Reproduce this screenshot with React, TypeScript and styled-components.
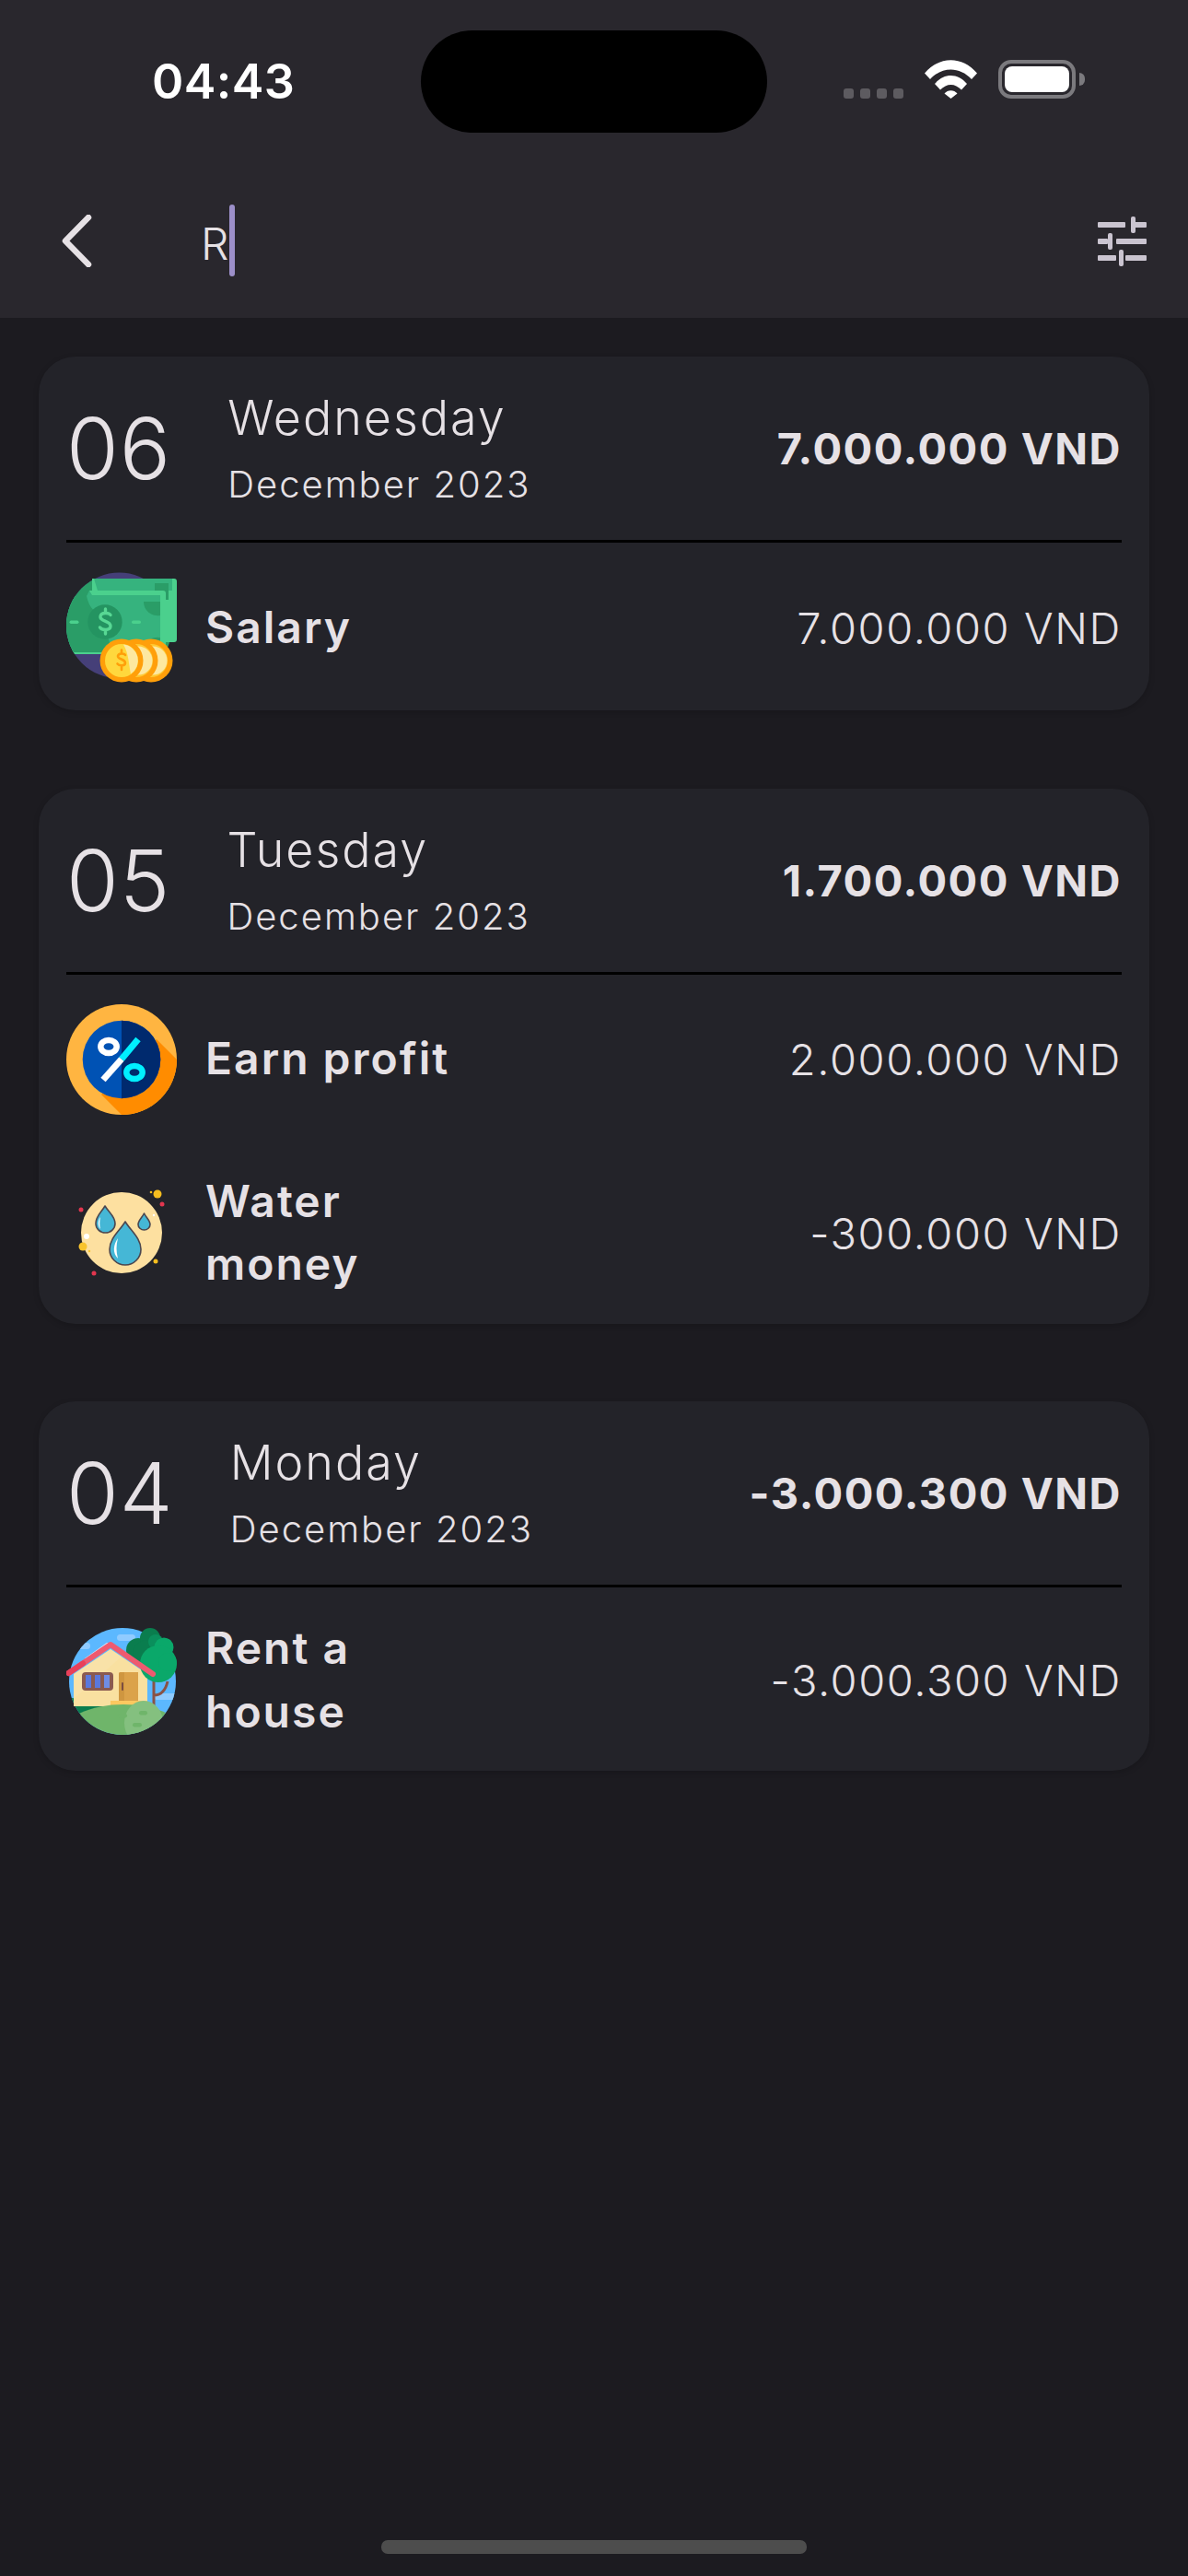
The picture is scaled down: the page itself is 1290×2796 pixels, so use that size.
import React from "react";
import styled, { createGlobalStyle } from "styled-components";

const GlobalStyle = createGlobalStyle`
  html, body {
    margin: 0;
    padding: 0;
    background: #1c1b20;
  }
  * {
    box-sizing: border-box;
  }
`;

const Page = styled.div`
  width: 1290px;
  height: 2796px;
  display: flex;
  flex-direction: column;
  background: #1c1b20;
  color: #e6e1e5;
  font-family: Inter, "Liberation Sans", sans-serif;
  overflow: hidden;
`;

const Header = styled.header`
  height: 345px;
  background: #29272d;
  display: flex;
  flex-direction: column;
`;

const StatusBar = styled.div`
  display: flex;
  align-items: center;
  padding-top: 33px;
`;

const StatusLeft = styled.div`
  width: 457px;
  padding-left: 165px;
`;

const Time = styled.span`
  font-size: 52px;
  font-weight: 600;
  color: #fff;
  letter-spacing: 0.4px;
`;

const Notch = styled.div`
  width: 376px;
  height: 111px;
  border-radius: 56px;
  background: #000;
`;

const StatusRight = styled.div`
  flex: 1;
  padding-left: 83px;
  margin-bottom: 5px;
  display: flex;
  align-items: flex-end;
`;

const SignalDots = styled.div`
  display: flex;
  gap: 7px;
  margin-right: 23px;
`;

const SignalDot = styled.span`
  width: 11px;
  height: 11px;
  border-radius: 3px;
  background: #5d5b60;
`;

const WifiIcon = styled.svg`
  width: 57px;
  height: 42px;
  margin-right: 23px;
`;

const Battery = styled.div`
  width: 84px;
  height: 42px;
  border: 4px solid #7b7a7e;
  border-radius: 14px;
  padding: 3px;
`;

const BatteryFill = styled.div`
  width: 100%;
  height: 100%;
  background: #fff;
  border-radius: 8px;
`;

const BatteryNub = styled.div`
  width: 6px;
  height: 14px;
  margin: 0 0 14px 4px;
  background: #7b7a7e;
  border-radius: 0 6px 6px 0;
`;

const Toolbar = styled.div`
  flex: 1;
  display: flex;
  align-items: center;
  padding: 34px 45px 0 67px;
`;

const BackIcon = styled.svg`
  width: 33px;
  height: 57px;
  flex: none;
`;

const SearchField = styled.div`
  flex: 1;
  margin: 6px 0 0 118px;
  display: flex;
  align-items: center;
  font-size: 48px;
  font-weight: 300;
`;

const Caret = styled.span`
  width: 6px;
  height: 78px;
  margin-left: 1px;
  margin-top: -8px;
  border-radius: 3px;
  background: #9c8fc9;
`;

const FilterIcon = styled.svg`
  width: 53px;
  height: 54px;
  flex: none;
`;

const Content = styled.main`
  flex: 1;
  display: flex;
  flex-direction: column;
  gap: 84.5px;
  padding: 42px 42px 0;
`;

const Card = styled.section`
  background: #232329;
  border-radius: 40px;
  box-shadow: 0 2px 6px rgba(0, 0, 0, 0.18);
`;

const CardHeader = styled.div`
  height: 199px;
  display: flex;
  align-items: center;
  padding: 0 30px;
`;

const DayNumber = styled.span`
  font-size: 92px;
  font-weight: 300;
  letter-spacing: 1px;
`;

const DateBlock = styled.div`
  margin-left: 61px;
  flex: 1;
  display: flex;
  flex-direction: column;
  gap: 17px;
`;

const Weekday = styled.span`
  font-size: 52px;
  font-weight: 300;
  line-height: 62px;
  letter-spacing: 2px;
`;

const MonthYear = styled.span`
  font-size: 40px;
  font-weight: 300;
  line-height: 48px;
  letter-spacing: 2px;
`;

const DayTotal = styled.span`
  font-size: 47px;
  font-weight: 700;
  letter-spacing: 1.5px;
`;

const Divider = styled.div`
  height: 3px;
  margin: 0 30px 2px;
  background: #000;
`;

const Row = styled.div`
  display: flex;
  align-items: center;
  padding: 30px;
`;

const RowIcon = styled.svg`
  width: 120px;
  height: 120px;
  flex: none;
`;

const RowName = styled.span`
  flex: 1;
  margin-left: 31px;
  max-width: 290px;
  font-size: 48px;
  font-weight: 600;
  line-height: 68.5px;
  letter-spacing: 2px;
`;

const RowAmount = styled.span`
  margin-left: auto;
  font-size: 47px;
  font-weight: 300;
  letter-spacing: 1.6px;
`;

const HomeBar = styled.div`
  width: 462px;
  height: 15px;
  margin: 0 auto 24px;
  border-radius: 7px;
  background: #4d4d4d;
`;

const MoneyArt = () => (
  <RowIcon viewBox="0 0 120 120">
    <defs>
      <clipPath id="money-clip">
        <circle cx="57.5" cy="58" r="57.5" />
      </clipPath>
    </defs>
    <circle cx="57.5" cy="58" r="57.5" fill="#453f78" />
    <g clipPath="url(#money-clip)">
      <rect x="0" y="7" width="115" height="82" fill="#2a9d67" />
      <rect x="0" y="84" width="115" height="5" fill="#4bd08d" />
    </g>
    <path d="M28 7H117a3 3 0 0 1 3 3V73a3 3 0 0 1-3 3H100V20H28z" fill="#4bd08d" />
    <path d="M30 7H115V20H34z" fill="#36b37e" />
    <rect x="96" y="12" width="15" height="18" fill="#2a9d67" />
    <g clipPath="url(#money-clip)">
      <path d="M25 20H107V87H0V26H22z" fill="#36b37e" />
      <path d="M0 26H22C25 40 32 44 38 46L50 87H0z" fill="#2a9d67" />
    </g>
    <path d="M25 20H105a3 3 0 0 1 3 3V84H102V25H28z" fill="#4bd08d" />
    <path d="M84 32a15 15 0 0 0 18 15V32z" fill="#2a9d67" />
    <path d="M84 87a15 14 0 0 1 18-16V87z" fill="#2a9d67" />
    <circle cx="42" cy="54" r="18.7" fill="#249461" />
    <path
      d="M48 46.500c-1.500-2.500-10-3.500-11 1.500-1 6 11 4 11 10.500 0 5-9 5-11.500 1.500M42.500 40v4M42.500 63v4"
      fill="none"
      stroke="#58d894"
      strokeWidth="3.400"
      strokeLinecap="round"
    />
    <rect x="3.500" y="52.500" width="10" height="3.500" rx="1.700" fill="#4bd08d" />
    <rect x="71" y="52.500" width="10" height="3.500" rx="1.700" fill="#4bd08d" />
    {[92, 76].map((cx) => (
      <g key={cx}>
        <circle cx={cx} cy="96" r="23.500" fill="#ff9f0a" />
        <circle cx={cx} cy="96" r="18" fill="#ffc933" />
        <circle cx={cx + 2} cy="96" r="15.500" fill="#fde8a0" />
      </g>
    ))}
    <circle cx="60" cy="96" r="23.500" fill="#ff9f0a" />
    <circle cx="60" cy="96" r="18" fill="#ffd83d" />
    <path d="M62 78.500a17.500 17.500 0 0 1 8 32c-2-8-2-22-8-32z" fill="#fde8a0" />
    <path
      d="M64 90c-1-2-7.500-2.500-8 1-.500 4 8 3 8 7.500 0 3.500-6.500 3.500-8.500 1M60 84.500v3M60 103v3"
      fill="none"
      stroke="#ff9f0a"
      strokeWidth="2.600"
      strokeLinecap="round"
    />
  </RowIcon>
);

const PercentArt = () => (
  <RowIcon viewBox="0 0 120 120">
    <circle cx="60" cy="60" r="60" fill="#ffb541" />
    <path d="M98 38L120 60A60 60 0 0 1 60 120L38 98z" fill="#ff8c00" />
    <circle cx="60" cy="60" r="42.300" fill="#0052b4" />
    <path d="M60 17.700a42.300 42.300 0 0 1 0 84.600z" fill="#002a6e" />
    <path d="M40 82L60 59.500" stroke="#fff" strokeWidth="7" />
    <path d="M60 59.500L78 38" stroke="#00f0ff" strokeWidth="7" />
    <ellipse cx="46" cy="46" rx="8.700" ry="7" fill="none" stroke="#fff" strokeWidth="6.500" />
    <ellipse cx="74" cy="74" rx="8.700" ry="7" fill="none" stroke="#00f0ff" strokeWidth="6.500" />
  </RowIcon>
);

const drops = [
  "M64 48C70 58 81 66 81 78A17 17 0 0 1 47 78C47 66 58 58 64 48z",
  "M42 31C46 38 53 42 53 50A10.500 10 0 0 1 32 50C32 42 38 38 42 31z",
  "M84.500 39C87 44 91 47 91 51A6.500 6 0 0 1 78 51C78 47 82 44 84.500 39z",
];

const dots: [number, number, number, string][] = [
  [99, 18, 4.5, "#f5bd1f"],
  [92, 16, 1.3, "#f5bd1f"],
  [104, 29, 2.5, "#e2364f"],
  [16, 35, 2.5, "#e2364f"],
  [22, 64, 3, "#ffffff"],
  [18, 75, 4.5, "#f9c42e"],
  [25, 80, 1.2, "#f9c42e"],
  [30, 104, 2.5, "#e2364f"],
  [97, 91, 2.5, "#f5bd1f"],
  [95, 41, 1.2, "#ffffff"],
];

const WaterArt = () => (
  <RowIcon viewBox="0 0 120 120">
    <circle cx="60" cy="60" r="44" fill="#fde0a0" />
    {drops.map((d) => (
      <path key={d} d={d} fill="#45b7d6" stroke="#4b4750" strokeWidth="1.600" strokeLinejoin="round" />
    ))}
    <path d="M56 66C51 73 50 82 56 88C54 80 54 74 56 66z" fill="#fff" />
    <path d="M37 43C34 47 34 53 37 56C36 52 36 48 37 43z" fill="#fff" />
    {dots.map(([cx, cy, r, fill]) => (
      <circle key={`${cx}-${cy}`} cx={cx} cy={cy} r={r} fill={fill} />
    ))}
  </RowIcon>
);

const HouseArt = () => (
  <RowIcon viewBox="0 0 120 120">
    <defs>
      <clipPath id="house-clip">
        <circle cx="61" cy="61" r="58" />
      </clipPath>
    </defs>
    <circle cx="61" cy="61" r="58" fill="#5cb8ff" />
    <g clipPath="url(#house-clip)">
      <rect x="55" y="10" width="20" height="7" rx="3.500" fill="#90cbff" />
      <rect x="0" y="19" width="26" height="7" rx="3.500" fill="#90cbff" />
      <rect x="95" y="74" width="30" height="7" rx="3.500" fill="#90cbff" />
      <path d="M0 79C20 78 38 84 48 92L20 110H0z" fill="#0a7d4e" />
    </g>
    <path d="M20 36L44 19L50 20L24 40z" fill="#d7e8ff" />
    <path d="M8 53L48 26L88 53V88H8z" fill="#f9e0a0" />
    <path d="M8 53L48 26L60 34L8 80z" fill="#fbe7b3" opacity="0.4" />
    <rect x="17" y="51" width="34" height="20" rx="4" fill="#8a5a50" />
    <rect x="21" y="54" width="6" height="14" fill="#5a78dc" />
    <rect x="31" y="54" width="6" height="14" fill="#5a78dc" />
    <rect x="41" y="54" width="6" height="14" fill="#6f8de6" />
    <path d="M57 53a2 2 0 0 1 2-2H78V83H57z" fill="#dba24a" />
    <path d="M57 53a2 2 0 0 1 2-2H63V83H57z" fill="#cf9640" />
    <rect x="60" y="62" width="2" height="9" rx="1" fill="#7a4c40" />
    <path d="M48 82H88V90H48z" fill="#fcc860" />
    <path d="M95 61V94M95 76C103 76 108 70 110 61" fill="none" stroke="#8a5245" strokeWidth="3" />
    <circle cx="78" cy="27" r="13" fill="#0a7d4e" />
    <circle cx="91" cy="14" r="11" fill="#0a7d4e" />
    <circle cx="88" cy="32" r="16" fill="#0a7d4e" />
    <circle cx="97" cy="18" r="8" fill="#0a8f5c" />
    <circle cx="106" cy="24" r="10.500" fill="#0aa86a" />
    <circle cx="100" cy="42" r="20" fill="#0aa86a" />
    <circle cx="110" cy="40" r="10" fill="#0aa86a" />
    <polyline
      points="2.500,52 48,21 94,53"
      fill="none"
      stroke="#ee5a6f"
      strokeWidth="6"
      strokeLinecap="round"
      strokeLinejoin="round"
    />
    <path d="M2.500 52L18 41.500" stroke="#e8405a" strokeWidth="6" strokeLinecap="round" />
    <g clipPath="url(#house-clip)">
      <ellipse cx="62" cy="118" rx="66" ry="32" fill="#6fb56a" />
      <ellipse cx="84" cy="106" rx="21" ry="24" fill="#84c07f" />
      <rect x="56" y="96" width="10" height="4.500" rx="2.200" fill="#6fb56a" />
      <rect x="79" y="93" width="9" height="4.500" rx="2.200" fill="#6fb56a" />
      <rect x="72" y="106" width="10" height="4.500" rx="2.200" fill="#6fb56a" />
    </g>
  </RowIcon>
);

type Entry = {
  name: string;
  amount: string;
  art: React.ReactNode;
};

type Day = {
  day: string;
  weekday: string;
  total: string;
  entries: Entry[];
};

const days: Day[] = [
  {
    day: "06",
    weekday: "Wednesday",
    total: "7.000.000 VND",
    entries: [{ name: "Salary", amount: "7.000.000 VND", art: <MoneyArt /> }],
  },
  {
    day: "05",
    weekday: "Tuesday",
    total: "1.700.000 VND",
    entries: [
      { name: "Earn profit", amount: "2.000.000 VND", art: <PercentArt /> },
      { name: "Water money", amount: "-300.000 VND", art: <WaterArt /> },
    ],
  },
  {
    day: "04",
    weekday: "Monday",
    total: "-3.000.300 VND",
    entries: [{ name: "Rent a house", amount: "-3.000.300 VND", art: <HouseArt /> }],
  },
];

const App: React.FC = () => (
  <Page>
    <GlobalStyle />
    <Header>
      <StatusBar>
        <StatusLeft>
          <Time>04:43</Time>
        </StatusLeft>
        <Notch />
        <StatusRight>
          <SignalDots>
            <SignalDot />
            <SignalDot />
            <SignalDot />
            <SignalDot />
          </SignalDots>
          <WifiIcon viewBox="0 0 57 42">
            <path d="M0 14.500C16-4.500 41-4.500 57 14.500L51 21C38 7 19 7 6 21z" fill="#fff" />
            <path d="M11 26C21 14 36 14 46 26L40 32.500C33 25 24 25 17 32.500z" fill="#fff" />
            <path d="M21.500 36.500C25 32 32 32 35.500 36.500L28.500 42z" fill="#fff" />
          </WifiIcon>
          <Battery>
            <BatteryFill />
          </Battery>
          <BatteryNub />
        </StatusRight>
      </StatusBar>
      <Toolbar>
        <BackIcon viewBox="0 0 33 57">
          <polyline
            points="29,3 4,28.500 29,54"
            fill="none"
            stroke="#e6e1e5"
            strokeWidth="6.500"
            strokeLinecap="round"
            strokeLinejoin="round"
          />
        </BackIcon>
        <SearchField>
          R<Caret />
        </SearchField>
        <FilterIcon viewBox="0 0 53 54">
          <g fill="#cac4d0">
            <rect x="0" y="6" width="30" height="6" rx="1" />
            <rect x="38" y="6" width="15" height="6" rx="1" />
            <rect x="36" y="0" width="5" height="18" rx="2" />
            <rect x="0" y="24" width="11" height="6" rx="1" />
            <rect x="20" y="24" width="33" height="6" rx="1" />
            <rect x="11" y="18" width="5" height="18" rx="2" />
            <rect x="0" y="42" width="20" height="6" rx="1" />
            <rect x="30" y="42" width="23" height="6" rx="1" />
            <rect x="23" y="36" width="5" height="18" rx="2" />
          </g>
        </FilterIcon>
      </Toolbar>
    </Header>
    <Content>
      {days.map((d) => (
        <Card key={d.day}>
          <CardHeader>
            <DayNumber>{d.day}</DayNumber>
            <DateBlock>
              <Weekday>{d.weekday}</Weekday>
              <MonthYear>December 2023</MonthYear>
            </DateBlock>
            <DayTotal>{d.total}</DayTotal>
          </CardHeader>
          <Divider />
          {d.entries.map((e) => (
            <Row key={e.name}>
              {e.art}
              <RowName>{e.name}</RowName>
              <RowAmount>{e.amount}</RowAmount>
            </Row>
          ))}
        </Card>
      ))}
    </Content>
    <HomeBar />
  </Page>
);

export default App;
